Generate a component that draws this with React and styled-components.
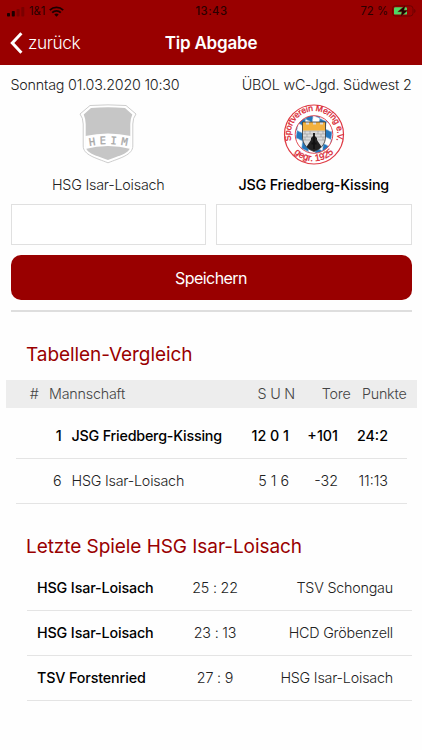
import React from 'react'
import styled, { createGlobalStyle } from 'styled-components'

const GlobalStyle = createGlobalStyle`
  * {
    box-sizing: border-box;
  }
  body {
    margin: 0;
    background-color: #fefefe;
    color: #222;
    font-family: 'Inter', 'Liberation Sans', sans-serif;
    font-size: 14.3px;
    font-weight: 300;
    letter-spacing: -0.2px;
  }
`;
const Screen = styled.main`
  width: 422px;
  height: 750px;
  overflow: hidden;
`;
const Header = styled.header`
  height: 65px;
  background-color: #990000;
`;
const StatusBar = styled.div`
  display: grid;
  grid-template-columns: 1fr auto 1fr;
  align-items: center;
  height: 22px;
  padding: 0 6px 0 7px;
  font-size: 11.3px;
  font-weight: 400;
  letter-spacing: 0;
  color: #2a0000;
`;
const StatusGroup = styled.div`
  display: flex;
  align-items: center;
  justify-content: ${({ $end }) => ($end ? 'flex-end' : 'flex-start')};
  gap: 4px;
`;
const Clock = styled.span`
  font-weight: 500;
  letter-spacing: 0.5px;
`;
const NavBar = styled.nav`
  display: grid;
  grid-template-columns: 1fr auto 1fr;
  align-items: center;
  height: 42px;
  padding: 0 10px;
  color: #fff;
`;
const BackButton = styled.button`
  display: flex;
  align-items: center;
  gap: 5px;
  height: 24px;
  padding: 0 0 1px;
  border: 0;
  background: none;
  color: inherit;
  font: 300 17.3px 'Inter', sans-serif;
  letter-spacing: -0.4px;
`;
const PageTitle = styled.h1`
  margin: 0;
  font-size: 17px;
  font-weight: 600;
  letter-spacing: -0.2px;
`;
const Form = styled.form`
  margin: 0 10.5px;
  border-bottom: 2px solid #dedede;
  padding-bottom: 10px;
`;
const GameInfo = styled.div`
  display: flex;
  justify-content: space-between;
  align-items: center;
  height: 39px;
`;
const Teams = styled.div`
  display: grid;
  grid-template-columns: 1fr 1fr;
  column-gap: 10px;
`;
const Team = styled.div`
  display: flex;
  flex-direction: column;
  align-items: center;
`;
const TeamName = styled.span`
  height: 39px;
  line-height: 39px;
  font-weight: ${({ $bold }) => ($bold ? 500 : 300)};
  color: ${({ $bold }) => ($bold ? '#000' : '#222')};
`;
const GoalInput = styled.input`
  width: 100%;
  height: 41px;
  border: 1.5px solid #e0e0e0;
  border-radius: 0;
  background-color: #fff;
  outline: none;
`;
const SaveButton = styled.button`
  display: block;
  width: 100%;
  height: 45px;
  margin-top: 10px;
  border: 0;
  border-radius: 10px;
  background-color: #990000;
  color: #fff;
  font: 400 16px 'Inter', sans-serif;
  letter-spacing: -0.55px;
`;
const Heading = styled.h2`
  height: 24px;
  margin: 31px 0 ${({ $bottom }) => $bottom}px 26px;
  line-height: 24px;
  font-size: 19px;
  font-weight: 400;
  letter-spacing: -0.06px;
  color: #990000;
`;
const TableRow = styled.div`
  display: grid;
  grid-template-columns: 46px 10px 217.5px 49px 50px;
  align-items: center;
  height: 45px;
  margin: 0 15.5px;
  padding-bottom: 2px;
  border-bottom: 1px solid #e4e4e4;
  font-weight: ${({ $bold }) => ($bold ? 500 : 300)};
  color: ${({ $bold }) => ($bold ? '#000' : '#222')};
`;
const Cell = styled.span`
  text-align: ${({ $right }) => ($right ? 'right' : 'left')};
  white-space: nowrap;
`;
const NumberCell = styled(Cell)`
  letter-spacing: 0;
`;
const TeamCell = styled.div`
  grid-column: 3;
  display: flex;
  justify-content: space-between;
  white-space: nowrap;
`;
const TableHead = styled.div`
  display: grid;
  grid-template-columns: 33px 10.5px 246px 55.5px 56px;
  align-items: center;
  height: 28px;
  margin: 0 5.5px 6px;
  padding-bottom: 1px;
  background-color: #ededed;
  color: #444;
`;
const GameRow = styled.div`
  display: grid;
  grid-template-columns: 1fr 70px 1fr;
  align-items: center;
  height: 45px;
  margin: 0 10.5px 0 26.5px;
  padding: 0 18.5px 2px 10.5px;
  border-bottom: 1px solid #e4e4e4;
`;
const GameTeam = styled(Cell)`
  font-weight: ${({ $bold }) => ($bold ? 500 : 300)};
  color: ${({ $bold }) => ($bold ? '#000' : '#222')};
  letter-spacing: ${({ $bold }) => ($bold ? '-0.13px' : '-0.2px')};
`;
const Score = styled.span`
  text-align: center;
`;

const games = [
  { home: 'HSG Isar-Loisach', score: '25 : 22', guest: 'TSV Schongau' },
  { home: 'HSG Isar-Loisach', score: '23 : 13', guest: 'HCD Gröbenzell' },
  { home: 'TSV Forstenried', score: '27 : 9', guest: 'HSG Isar-Loisach' },
]

const table = [
  { place: 1, team: 'JSG Friedberg-Kissing', record: '12 0 1', goals: '+101', points: '24:2', bold: true },
  { place: 6, team: 'HSG Isar-Loisach', record: '5 1 6', goals: '-32', points: '11:13' },
]

const SignalIcon = () => (
  <svg width="18" height="11" viewBox="0 0 18 11">
    <rect x="0" y="7" width="3" height="3.5" rx="0.7" fill="#1c0000" />
    <rect x="4.8" y="5" width="3" height="5.5" rx="0.7" fill="#1c0000" />
    <rect x="9.6" y="3" width="3" height="7.5" rx="0.7" fill="#7a0000" />
    <rect x="14.3" y="1" width="3" height="9.5" rx="0.7" fill="#7a0000" />
  </svg>
)

const WifiIcon = () => (
  <svg width="15" height="11" viewBox="0 0 15 11" fill="none" stroke="#1c0000" strokeWidth="1.9">
    <path d="M0.8 4.1a9.6 9.6 0 0 1 13.4 0" />
    <path d="M3.2 6.6a6.1 6.1 0 0 1 8.6 0" />
    <path d="M7.5 10.7 5.3 8.5a3.2 3.2 0 0 1 4.4 0z" fill="#1c0000" stroke="none" />
  </svg>
)

const BatteryIcon = () => (
  <svg width="24" height="12" viewBox="0 0 24 12">
    <rect x="0.5" y="0.8" width="20.5" height="10.2" rx="2.8" fill="none" stroke="#6d0000" />
    <rect x="2" y="2.2" width="13" height="7.4" rx="1.2" fill="#4cd964" />
    <path d="M22.2 4v4c.8-.3 1.3-1.1 1.3-2s-.5-1.7-1.3-2z" fill="#6d0000" />
    <path d="M13.5 0.3 5.8 6.7h4.2L8.6 11.7l7.2-6.4h-4z" fill="#1c0000" stroke="#990000" strokeWidth="0.4" />
  </svg>
)

const BackIcon = () => (
  <svg width="13" height="22" viewBox="0 0 13 22" fill="none" stroke="#fff" strokeWidth="3">
    <path d="M11.4 1.3 2.3 11l9.1 9.7" />
  </svg>
)

const HomeCrest = () => (
  <svg width="60" height="61" viewBox="0 0 60 61">
    <path
      d="M12 1.5Q30 .2 48 1.5L58 10Q54.8 14 54.8 20V42C54.8 51 42 54 30 58.8C18 54 5.2 51 5.2 42V20Q5.2 14 2 10Z"
      fill="#fff" stroke="#cdcdcd" strokeWidth="1"
    />
    <path d="M13 4Q30 2.7 47 4L54.3 10.4Q52.3 15 52.3 20V42C52.3 49.5 41 51.7 30 56C19 51.7 7.7 49.5 7.7 42V20Q7.7 15 5.7 10.4Z" fill="#c6c6c6" />
    <path d="M7.2 32Q30 27 52.8 32V45Q30 39 7.2 45Z" fill="#fff" />
    <path id="homeArc" d="M8 42.8Q30 37.5 53 42.8" fill="none" />
    <text fontFamily="'DejaVu Sans Mono', monospace" fontSize="10.5" fontWeight="400" fill="#a8a8a8" stroke="#a8a8a8" strokeWidth="0.3" letterSpacing="4.2">
      <textPath href="#homeArc" startOffset="3.5">HEIM</textPath>
    </text>
  </svg>
)

const GuestCrest = () => (
  <svg width="62" height="61" viewBox="0 0 62 61">
    <defs>
      <pattern id="lozenge" width="8.6" height="12" patternUnits="userSpaceOnUse" patternTransform="translate(31 31) rotate(-28)">
        <rect width="8.6" height="12" fill="#fff" />
        <path d="M4.3 0 8.6 6 4.3 12 0 6Z" fill="#2277bd" />
      </pattern>
      <clipPath id="shield">
        <path d="M19.5 18H42.5V33C42.5 40 37.5 45.5 31 47.5C24.5 45.5 19.5 40 19.5 33Z" />
      </clipPath>
    </defs>
    <circle cx="31" cy="30.5" r="29.5" fill="#fff" stroke="#df3b45" strokeWidth="1.2" />
    <circle cx="31" cy="30.5" r="18.8" fill="url(#lozenge)" stroke="#df3b45" strokeWidth="0.9" />
    <g clipPath="url(#shield)">
      <rect x="19" y="18" width="24" height="30" fill="#dcdcdc" />
      <path d="M19 27h24M19 30h24M19 33h24M19 36h24M22 27v3M27 27v3M35 27v3M40 27v3M24 30v3M38 30v3M22 33v3M40 33v3" stroke="#888" strokeWidth="0.5" />
      <path d="M19 18h4v2.5h3V18h4v2.5h3V18h4v2.5h3V18h3v8.5H19z" fill="#f3b13d" />
      <path d="M20 48 28 36 28 34Q31 30 34 34L34 36 42 48Z" fill="#222" />
      <path d="M31 29v16M28.5 39.5h5" stroke="#111" strokeWidth="1.8" />
    </g>
    <path d="M19.5 18H42.5V33C42.5 40 37.5 45.5 31 47.5C24.5 45.5 19.5 40 19.5 33Z" fill="none" stroke="#333" strokeWidth="0.8" />
    <path id="ringTop" d="M9.3 39.2A23.4 23.4 0 1 1 52.7 39.2" fill="none" />
    <path id="ringBottom" d="M4.5 35A26.9 26.9 0 0 0 57.5 35" fill="none" />
    <g fontFamily="'Liberation Sans', sans-serif" fill="#d92633" stroke="#d92633" strokeWidth="0.3" letterSpacing="0">
      <text fontSize="8.6">
        <textPath href="#ringTop" startOffset="2.5" textLength="86">Sportverein Mering e.V.</textPath>
      </text>
      <text fontSize="9.4" textAnchor="middle">
        <textPath href="#ringBottom" startOffset="50%">gegr. 1925</textPath>
      </text>
    </g>
  </svg>
)

const App = () => (
  <Screen>
    <GlobalStyle />
    <Header>
      <StatusBar>
        <StatusGroup>
          <SignalIcon />
          <span>1&amp;1</span>
          <WifiIcon />
        </StatusGroup>
        <Clock>13:43</Clock>
        <StatusGroup $end>
          <span>72 %</span>
          <BatteryIcon />
        </StatusGroup>
      </StatusBar>
      <NavBar>
        <BackButton>
          <BackIcon />
          zurück
        </BackButton>
        <PageTitle>Tip Abgabe</PageTitle>
      </NavBar>
    </Header>
    <Form>
      <GameInfo>
        <span>Sonntag 01.03.2020 10:30</span>
        <span>ÜBOL wC-Jgd. Südwest 2</span>
      </GameInfo>
      <Teams>
        <Team>
          <HomeCrest />
          <TeamName>HSG Isar-Loisach</TeamName>
          <GoalInput />
        </Team>
        <Team>
          <GuestCrest />
          <TeamName $bold>JSG Friedberg-Kissing</TeamName>
          <GoalInput />
        </Team>
      </Teams>
      <SaveButton type="button">Speichern</SaveButton>
    </Form>
    <Heading $bottom={13}>Tabellen-Vergleich</Heading>
    <TableHead>
      <Cell $right>#</Cell>
      <TeamCell>
        <span>Mannschaft</span>
        <span>S U N</span>
      </TeamCell>
      <Cell $right>Tore</Cell>
      <Cell $right>Punkte</Cell>
    </TableHead>
    {table.map((row) => (
      <TableRow key={row.place} $bold={row.bold}>
        <Cell $right>{row.place}</Cell>
        <TeamCell>
          <span>{row.team}</span>
          <NumberCell>{row.record}</NumberCell>
        </TeamCell>
        <NumberCell $right>{row.goals}</NumberCell>
        <NumberCell $right>{row.points}</NumberCell>
      </TableRow>
    ))}
    <Heading $bottom={7}>Letzte Spiele HSG Isar-Loisach</Heading>
    {games.map((game, index) => (
      <GameRow key={index}>
        <GameTeam $bold>{game.home}</GameTeam>
        <Score>{game.score}</Score>
        <GameTeam $right>{game.guest}</GameTeam>
      </GameRow>
    ))}
  </Screen>
)

export default App;
